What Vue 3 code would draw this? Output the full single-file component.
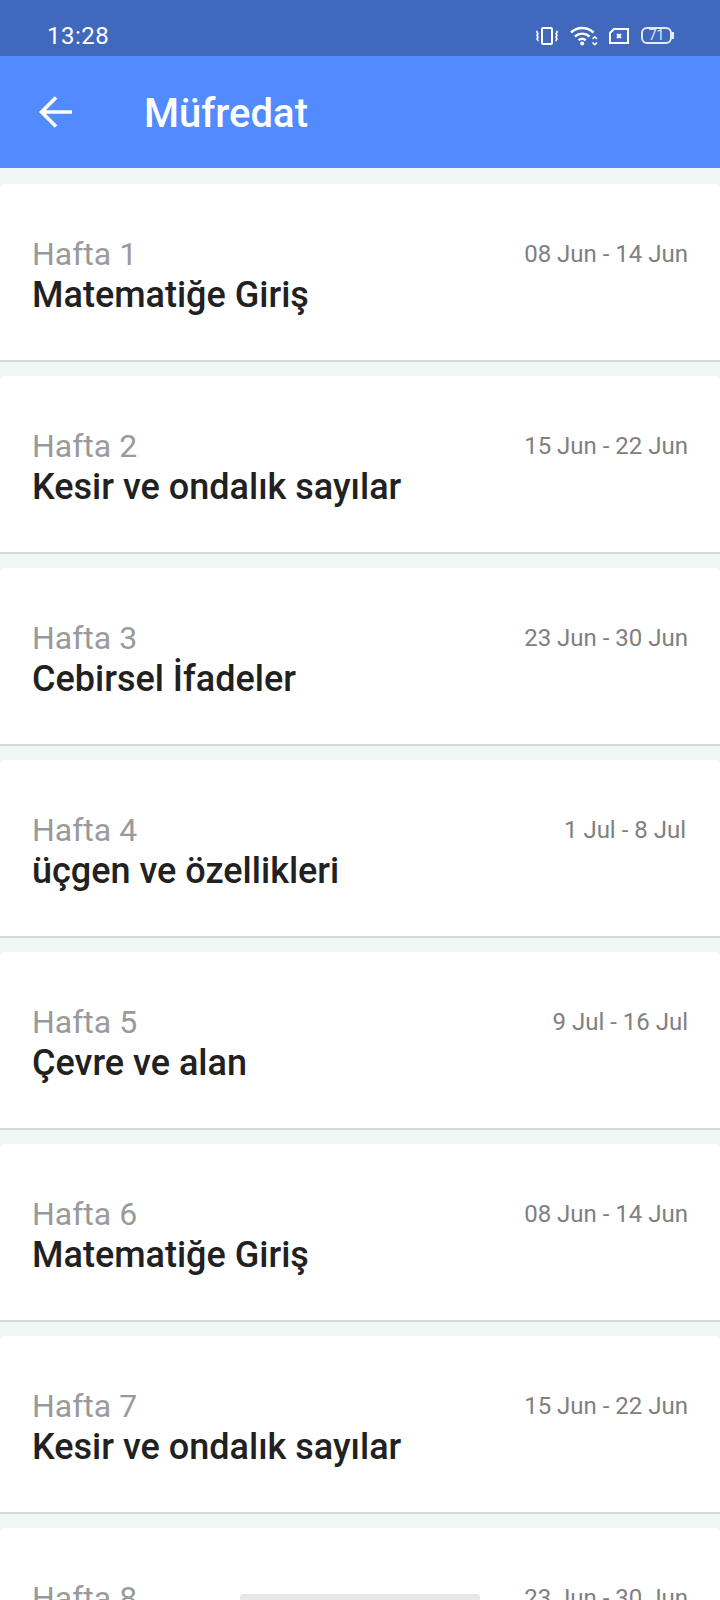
<script setup>
const weeks = [
  { label: 'Hafta 1', title: 'Matematiğe Giriş', dates: '08 Jun - 14 Jun' },
  { label: 'Hafta 2', title: 'Kesir ve ondalık sayılar', dates: '15 Jun - 22 Jun' },
  { label: 'Hafta 3', title: 'Cebirsel İfadeler', dates: '23 Jun - 30 Jun' },
  { label: 'Hafta 4', title: 'üçgen ve özellikleri', dates: '1 Jul - 8 Jul', inset: true },
  { label: 'Hafta 5', title: 'Çevre ve alan', dates: '9 Jul - 16 Jul' },
  { label: 'Hafta 6', title: 'Matematiğe Giriş', dates: '08 Jun - 14 Jun' },
  { label: 'Hafta 7', title: 'Kesir ve ondalık sayılar', dates: '15 Jun - 22 Jun' },
  { label: 'Hafta 8', title: 'Cebirsel İfadeler', dates: '23 Jun - 30 Jun' },
];
</script>

<template>
  <div class="screen">
    <div class="statusbar">
      <span class="time">13:28</span>
      <div class="status-icons">
        <svg width="24" height="20" viewBox="0 0 24 20" fill="none" stroke="#fff" stroke-width="2">
          <rect x="8" y="2" width="10" height="16" rx="1" />
          <path d="M3.500 5c-2 1.200 1.500 2.400 0 3.500s1.500 2.400 0 3.500 1.500 2.400 0 3M22.500 5c2 1.200-1.500 2.400 0 3.500s-1.500 2.400 0 3.500-1.500 2.400 0 3" stroke-width="1.600" />
        </svg>
        <svg width="28" height="20" viewBox="0 0 28 20" fill="none" stroke="#fff" stroke-width="2.400">
          <path d="M1 6.500c6.500-6 16-6 22.500 0M4.800 10.500c4.300-3.800 10.500-3.800 14.800 0M8.600 14.200c2-1.600 5-1.600 7.200 0" />
          <circle cx="12.200" cy="17.500" r="2" fill="#fff" stroke="none" />
          <path d="M22.500 13l2.300-2.200 2.200 2.200M22.500 16.500l2.300 2.200 2.200-2.200" stroke-width="1.600" />
        </svg>
        <svg class="sim" width="20" height="16" viewBox="0 0 20 16" fill="none" stroke="#fff">
          <path d="M5 1h14v14H1V5z" stroke-width="2" />
          <path d="M8 6l4 4M12 6l-4 4" stroke-width="2" />
        </svg>
        <div class="battery">
          <div class="battery-body">71</div>
          <div class="battery-tip"></div>
        </div>
      </div>
    </div>

    <header class="appbar">
      <svg class="back" width="36" height="36" viewBox="0 0 36 36" fill="none" stroke="#fff" stroke-width="3.600">
        <path d="M34 18H4M18 3.500L3.500 18 18 32.500" />
      </svg>
      <h1>Müfredat</h1>
    </header>

    <div class="list">
      <div v-for="week in weeks" :key="week.label" class="card">
        <div class="text">
          <div class="label">{{ week.label }}</div>
          <div class="title">{{ week.title }}</div>
        </div>
        <div class="dates" :class="{ inset: week.inset }">{{ week.dates }}</div>
      </div>
    </div>

    <div class="home-bar"></div>
  </div>
</template>

<style scoped>
.screen {
  position: relative;
  height: 1600px;
  overflow: hidden;
  background: #f2f6f6;
  font-family: Roboto, "Noto Sans", sans-serif;
}

.statusbar {
  height: 56px;
  background: #4068bc;
  color: #fff;
  display: flex;
  align-items: center;
  justify-content: space-between;
  padding: 15px 46px 0 47px;
  box-sizing: border-box;
}

.time {
  font-size: 24px;
  letter-spacing: 0.5px;
}

.status-icons {
  display: flex;
  align-items: center;
  gap: 12px;
}

.sim {
  margin-left: -1px;
}

.battery {
  display: flex;
  align-items: center;
}

.battery-body {
  width: 31px;
  height: 17px;
  box-sizing: border-box;
  border: 2px solid #e4e9f5;
  border-radius: 6px;
  font-size: 14px;
  line-height: 13px;
  text-align: center;
  color: #dfe6f5;
}

.battery-tip {
  width: 2px;
  height: 7px;
  background: #e4e9f5;
}

.appbar {
  height: 112px;
  background: #528bff;
  display: flex;
  align-items: center;
  color: #fff;
}

.back {
  margin-left: 38px;
  flex: none;
}

h1 {
  margin: 2px 0 0 70px;
  font-size: 40px;
  font-weight: 500;
}

.list {
  padding-top: 16px;
  display: flex;
  flex-direction: column;
  gap: 14px;
}

.card {
  height: 178px;
  flex: none;
  box-sizing: border-box;
  background: #fff;
  border-radius: 6px 6px 0 0;
  border-bottom: 2px solid #d5d9d9;
  padding: 51px 32px 0;
  display: flex;
  justify-content: space-between;
  align-items: flex-start;
}

.label {
  font-size: 32px;
  line-height: 38px;
  color: #9a9a9a;
}

.title {
  font-size: 36px;
  line-height: 44px;
  font-weight: 500;
  color: #212121;
}

.dates {
  font-size: 24px;
  line-height: 38px;
  color: #808080;
}

.dates.inset {
  margin-right: 2px;
}

.home-bar {
  position: absolute;
  left: 240px;
  bottom: 0;
  width: 240px;
  height: 6px;
  border-radius: 3px 3px 0 0;
  background: #e8e8e8;
}
</style>
